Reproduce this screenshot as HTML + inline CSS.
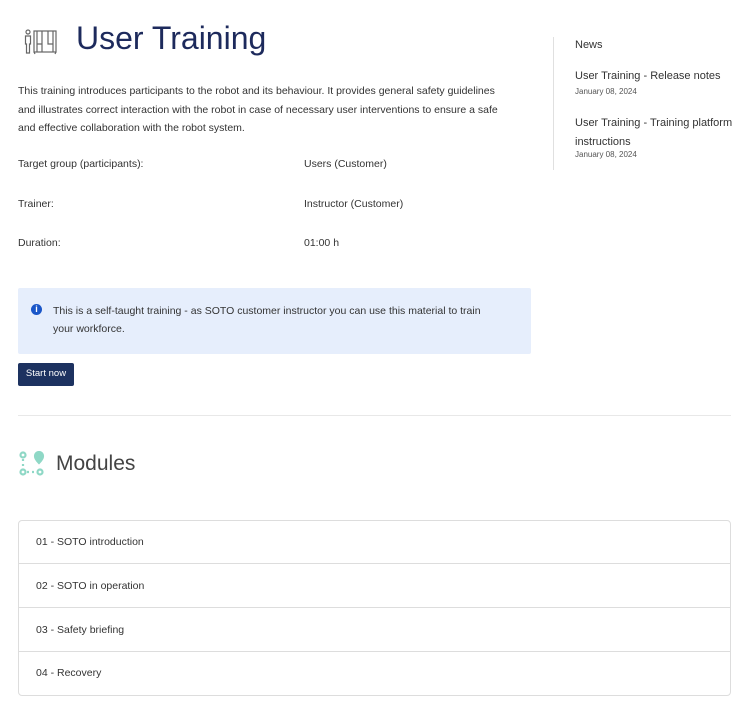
<!DOCTYPE html><html><head><style>
body{margin:0;background:#fff;font-family:"Liberation Sans",sans-serif;color:#333;}
.p{position:absolute;font-size:10.5px;color:#333;white-space:nowrap}
</style></head><body>
<svg style="position:absolute;left:24px;top:29px" width="34" height="26" viewBox="0 0 34 26" fill="none" stroke="#666" stroke-width="1.2">
<circle cx="4" cy="3" r="2"/><path d="M1.5 7h5v8h-1v9h-3v-9h-1z"/>
<rect x="10" y="2" width="22" height="21"/><path d="M13 2v21M29 2v21M18 2v21M24 2v13h5M13 15h5M10 23l1 2M32 23l-1 2"/></svg>
<div style="position:absolute;left:76px;top:20px;font-size:32px;color:#1d2a5c">User Training</div>
<div class="p" style="left:18px;top:82px;line-height:18.5px;white-space:normal;width:488px">This training introduces participants to the robot and its behaviour. It provides general safety guidelines<br>and illustrates correct interaction with the robot in case of necessary user interventions to ensure a safe<br>and effective collaboration with the robot system.</div>
<div class="p" style="left:18px;top:158px">Target group (participants):</div><div class="p" style="left:304px;top:158px">Users (Customer)</div>
<div class="p" style="left:18px;top:198px">Trainer:</div><div class="p" style="left:304px;top:198px">Instructor (Customer)</div>
<div class="p" style="left:18px;top:237px">Duration:</div><div class="p" style="left:304px;top:237px">01:00 h</div>
<div style="position:absolute;left:18px;top:288px;width:513px;height:66px;background:#e6eefc;border-radius:2px"></div>
<div style="position:absolute;left:31px;top:304px;width:11px;height:11px;border-radius:50%;background:#1a56c8;color:#fff;font-size:9px;font-weight:bold;text-align:center;line-height:11px">i</div>
<div class="p" style="left:53px;top:302px;line-height:18px;white-space:normal;width:445px">This is a self-taught training - as SOTO customer instructor you can use this material to train your workforce.</div>
<div style="position:absolute;left:18px;top:363px;width:56px;height:23px;background:#1d3260;border-radius:2px;color:#fff;font-size:9.5px;text-align:center;line-height:22px">Start now</div>
<div style="position:absolute;left:18px;top:415px;width:713px;height:1px;background:#e8e8e8"></div>
<svg style="position:absolute;left:19px;top:451px" width="27" height="26" viewBox="0 0 27 26" fill="none" stroke="#8fd8c6" stroke-width="2.2">
<circle cx="4" cy="4" r="2.5"/><circle cx="4" cy="21" r="2.5"/><circle cx="21" cy="21" r="2.5"/><path d="M4 8v2M4 13v2M8 21h2M13 21h2"/><path d="M20 1a4 4 0 0 1 4 4c0 3-4 7-4 7s-4-4-4-7a4 4 0 0 1 4-4z" fill="#8fd8c6"/></svg>
<div style="position:absolute;left:56px;top:452px;font-size:21px;color:#444">Modules</div>
<div style="position:absolute;left:18px;top:520px;width:711px;height:174px;border:1px solid #ddd;border-radius:4px"></div>
<div style="position:absolute;left:19px;top:563px;width:711px;height:1px;background:#ddd"></div>
<div style="position:absolute;left:19px;top:607px;width:711px;height:1px;background:#ddd"></div>
<div style="position:absolute;left:19px;top:651px;width:711px;height:1px;background:#ddd"></div>
<div class="p" style="left:36px;top:536px">01 - SOTO introduction</div>
<div class="p" style="left:36px;top:580px">02 - SOTO in operation</div>
<div class="p" style="left:36px;top:624px">03 - Safety briefing</div>
<div class="p" style="left:36px;top:667px">04 - Recovery</div>
<div style="position:absolute;left:553px;top:37px;width:1px;height:133px;background:#e0e0e0"></div>
<div class="p" style="left:575px;top:39px;font-size:11px">News</div>
<div class="p" style="left:575px;top:70px;font-size:11px">User Training - Release notes</div>
<div class="p" style="left:575px;top:87px;font-size:8px;color:#555">January 08, 2024</div>
<div class="p" style="left:575px;top:114px;font-size:11px;line-height:19px;white-space:normal;width:160px">User Training - Training platform instructions</div>
<div class="p" style="left:575px;top:150px;font-size:8px;color:#555">January 08, 2024</div>
</body></html>
